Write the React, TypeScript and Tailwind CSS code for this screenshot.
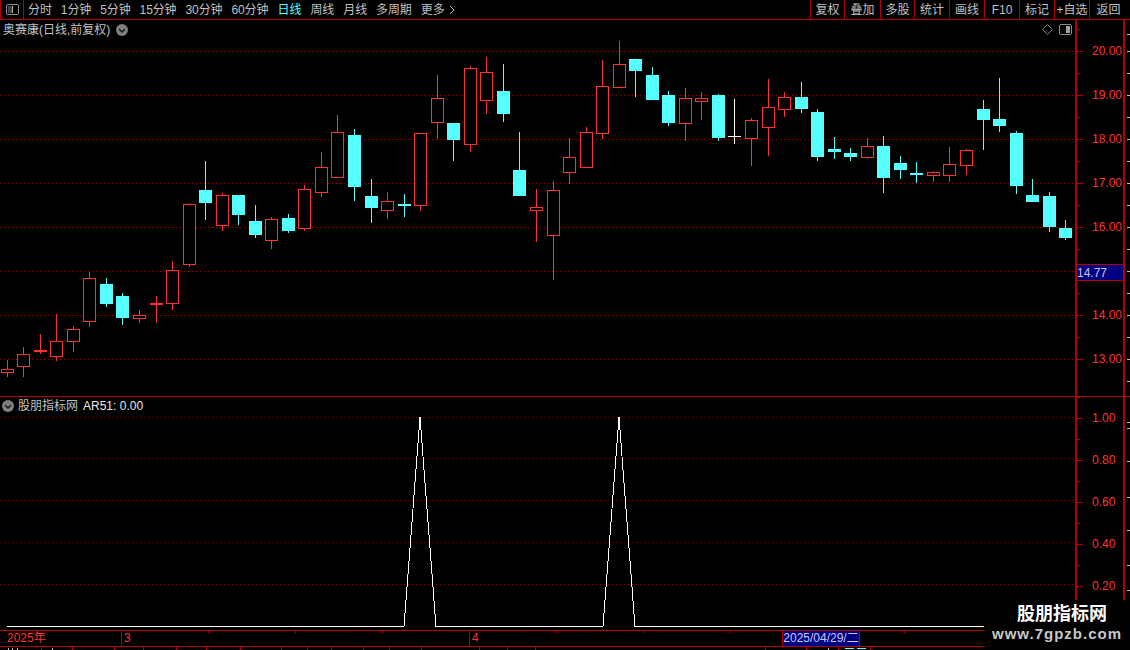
const RED_LINE = 'bg-[#b40000]';

// [type, high, bodyTop, bodyBottom, low] in page pixels
const candles: [string, number, number, number, number][] = [
  ['r', 360, 369, 372, 377], ['r', 347, 354, 366, 377], ['f', 334, 350, 352, 354], ['r', 314, 341, 356, 361],
  ['r', 326, 329, 341, 352], ['r', 272, 278, 321, 327], ['c', 278, 284, 304, 307], ['c', 293, 296, 318, 325],
  ['r', 310, 315, 318, 323], ['f', 296, 303, 305, 323], ['r', 261, 270, 303, 310], ['r', 204, 204, 264, 267],
  ['c', 161, 190, 203, 220], ['r', 193, 195, 225, 231], ['c', 195, 195, 215, 225], ['c', 205, 221, 235, 238],
  ['r', 217, 219, 240, 249], ['c', 214, 218, 231, 233], ['r', 185, 189, 228, 231], ['r', 152, 167, 192, 197],
  ['r', 115, 132, 177, 178], ['c', 129, 135, 187, 201], ['c', 179, 196, 208, 223], ['r', 192, 201, 210, 219],
  ['c', 194, 204, 206, 217], ['r', 133, 133, 205, 211], ['r', 75, 98, 122, 139], ['c', 123, 123, 140, 161],
  ['r', 66, 68, 144, 152], ['r', 57, 72, 100, 114], ['c', 64, 91, 114, 122], ['c', 132, 170, 196, 196],
  ['r', 189, 207, 210, 242], ['r', 181, 190, 235, 280], ['r', 138, 157, 172, 184], ['r', 127, 132, 167, 168],
  ['r', 60, 86, 133, 139], ['r', 41, 64, 87, 88], ['c', 59, 59, 71, 97], ['c', 67, 75, 100, 100],
  ['c', 91, 95, 123, 126], ['r', 88, 98, 123, 141], ['r', 92, 98, 101, 120], ['c', 94, 95, 138, 141],
  ['w', 99, 136, 137, 144], ['r', 118, 120, 138, 166], ['r', 79, 107, 127, 156], ['r', 92, 97, 109, 117],
  ['c', 82, 97, 109, 113], ['c', 109, 112, 157, 161], ['c', 137, 149, 152, 159], ['c', 148, 153, 157, 161],
  ['r', 138, 146, 157, 159], ['c', 136, 146, 178, 193], ['c', 156, 163, 170, 179], ['c', 162, 173, 175, 183],
  ['r', 171, 172, 175, 182], ['r', 147, 164, 175, 182], ['r', 149, 150, 165, 175], ['c', 100, 109, 120, 150],
  ['c', 78, 119, 126, 132], ['c', 131, 133, 186, 194], ['c', 179, 195, 202, 202], ['c', 192, 196, 227, 232],
  ['c', 220, 228, 238, 240],
];

function Candle({ i, d }: { i: number; d: [string, number, number, number, number] }) {
  const [type, high, top, bottom, low] = d;
  const x = Math.floor(7.2 + 16.54 * i);
  const color = type === 'c' ? '#55ffff' : type === 'w' ? '#ffffff' : '#ff3232';
  if (type === 'r') {
    return (
      <g>
        <rect x={x} y={high} width={1} height={top - high} fill={color} />
        <rect x={x} y={bottom} width={1} height={low - bottom} fill={color} />
        <rect x={x - 5.5} y={top + 0.5} width={12} height={bottom - top} fill="#000" stroke={color} />
      </g>
    );
  }
  return (
    <g>
      <rect x={x} y={high} width={1} height={low - high} fill={color} />
      <rect x={x - 6} y={top} width={13} height={bottom - top} fill={color} />
    </g>
  );
}

function DownBadge() {
  return (
    <svg width="12" height="12" viewBox="0 0 12 12">
      <circle cx="6" cy="6" r="6" fill="#808080" />
      <path d="M3 5l3 3 3-3" fill="none" stroke="#1a1a1a" strokeWidth="1.5" />
    </svg>
  );
}

function PanelIcon({ side }: { side: 'left' | 'right' }) {
  return (
    <svg width="13" height="11" viewBox="0 0 13 11" shapeRendering="crispEdges">
      <rect x="0.5" y="0.5" width="12" height="10" rx="2" fill="none" stroke="#8c8c8c" />
      {side === 'left' ? (
        <>
          <rect x="2" y="2" width="4" height="7" fill="#404040" />
          <rect x="6" y="2" width="1" height="7" fill="#b0b0b0" />
        </>
      ) : (
        <rect x="7" y="2" width="4" height="7" fill="#a0a0a0" />
      )}
    </svg>
  );
}

function AxisRow({ label, height, tickColor }: { label?: string; height: number; tickColor: string }) {
  return (
    <div className="relative flex items-center" style={{ height }}>
      <div className={`absolute left-0 top-0 h-px w-[3px] ${tickColor}`} />
      <div className={`h-px w-[6px] ${tickColor}`} />
      <span className="ml-[9px] text-[12px] leading-none text-[#ff3232]">{label}</span>
    </div>
  );
}

const navItems = ['分时', '1分钟', '5分钟', '15分钟', '30分钟', '60分钟', '日线', '周线', '月线', '多周期'];
const toolItems: [string, string][] = [
  ['复权', 'w-[34px]'], ['叠加', 'w-[36px]'], ['多股', 'w-[34px]'], ['统计', 'w-[35px]'], ['画线', 'w-[35px]'],
  ['F10', 'w-[35px]'], ['标记', 'w-[35px]'], ['+自选', 'w-[35px]'], ['返回', 'w-[38px]'],
];
const priceLabels = ['20.00', '19.00', '18.00', '17.00', '16.00', '', '14.00', '13.00'];
const subLabels = ['1.00', '0.80', '0.60', '0.40', '0.20'];
const stripTicks = [34, 51, 73, 95, 117, 139, 161, 183, 205, 227, 249, 271, 293, 315, 337, 359, 381, 422, 428, 461, 497, 530, 565, 590];

export default function App() {
  return (
    <div className="relative flex h-[650px] w-[1130px] flex-col overflow-hidden bg-black font-['Liberation_Sans','Noto_Sans_CJK_SC',sans-serif] text-[#c0c0c0]">
      {/* top toolbar */}
      <header className="flex h-[20px] shrink-0 border-b border-[#b40000] text-[12px] leading-[20px]">
        <div className="flex w-[24px] items-center justify-center border-x border-[#b40000]">
          <PanelIcon side="left" />
        </div>
        <nav className="ml-[4px] flex flex-1 gap-[9px] whitespace-nowrap">
          {navItems.map((n) => (
            <span key={n} className={n === '日线' ? 'text-[#55ffff]' : 'tracking-[-0.1px]'}>
              {n}
            </span>
          ))}
          <span className="flex items-center gap-[4px]">
            更多
            <svg width="6" height="10" viewBox="0 0 6 10">
              <path d="M1 1l4 4-4 4" fill="none" stroke="#c0c0c0" />
            </svg>
          </span>
        </nav>
        <div className="flex">
          {toolItems.map(([t, w]) => (
            <span key={t} className={`${w} border-l border-[#b40000] text-center whitespace-nowrap`}>
              {t}
            </span>
          ))}
          <span className="w-[3px]" />
        </div>
      </header>

      {/* price pane */}
      <section className="flex h-[377px] shrink-0 border-b border-[#b40000]">
        <div className="relative w-[1075px] shrink-0">
          <svg width="1075" height="376" viewBox="0 20 1075 376" shapeRendering="crispEdges" className="block">
            {[51, 95, 139, 183, 227, 271, 315, 359].map((y) => (
              <line key={y} x1="0" x2="1075" y1={y + 0.5} y2={y + 0.5} stroke="#a00000" strokeDasharray="1 3" />
            ))}
            {candles.map((d, i) => (
              <Candle key={i} i={i} d={d} />
            ))}
          </svg>
          <div className="absolute left-[3px] top-[1px] flex h-[18px] items-center gap-[6px] text-[12px] whitespace-nowrap">
            <span>奥赛康(日线,前复权)</span>
            <DownBadge />
          </div>
          <div className="absolute right-[3px] top-[4px] flex items-center gap-[6px]">
            <svg width="11" height="11" viewBox="0 0 11 11">
              <path d="M5.5 0.5l5 5-5 5-5-5z" fill="none" stroke="#808080" />
            </svg>
            <PanelIcon side="right" />
          </div>
        </div>
        <div className="relative w-[50px] shrink-0 border-x-2 border-[#b40000] pt-[9px]">
          {priceLabels.map((p) => (
            <AxisRow key={p || 'blank'} label={p} height={44} tickColor={RED_LINE} />
          ))}
          <div className="absolute left-0 right-0 top-[244px] flex h-[17px] items-center border-y border-[#b40000] bg-[#000080] text-[12px] text-[#c8c8ff]">
            14.77
          </div>
        </div>
        <div className="flex-1" />
      </section>

      {/* indicator pane */}
      <section className="flex h-[233px] shrink-0">
        <div className="relative w-[1075px] shrink-0">
          <svg width="1075" height="233" viewBox="0 397 1075 233" className="block">
            {[417, 458, 500, 542, 584].map((y) => (
              <line key={y} x1="0" x2="1075" y1={y + 0.5} y2={y + 0.5} stroke="#8c0000" strokeDasharray="1 3" shapeRendering="crispEdges" />
            ))}
            <polyline
              points="7,626.5 404,626.5 420,417 436,626.5 603,626.5 619,417 635,626.5 1000,626.5"
              fill="none"
              stroke="#ffffff"
              strokeWidth="1"
              shapeRendering="crispEdges"
            />
          </svg>
          <div className="absolute left-[2px] top-[2px] flex h-[14px] items-center gap-[4px] text-[12px] whitespace-nowrap">
            <DownBadge />
            <span>股朋指标网</span>
            <span className="ml-[1px] text-[#e8e8e8]">AR51: 0.00</span>
          </div>
        </div>
        <div className="w-[50px] shrink-0 border-x-2 border-[#b40000]">
          {subLabels.map((p) => (
            <AxisRow key={p} label={p} height={42} tickColor={RED_LINE} />
          ))}
        </div>
        <div className="flex-1" />
      </section>

      {/* time axis */}
      <section className="relative flex h-[17px] shrink-0 border-y border-[#b40000] text-[12px] leading-[15px] text-[#ff3232]">
        <div className="w-[121px] pl-[7px]">2025年</div>
        <div className="w-[348px] border-l border-[#b40000] pl-[2px]">3</div>
        <div className="flex-1 border-l border-[#b40000] pl-[2px]">4</div>
        <svg width="1130" height="2" className="absolute left-0 top-0" shapeRendering="crispEdges">
          {[208, 295, 382, 556, 643, 730, 817, 904].map((x) => (
            <rect key={x} x={x} y="0" width="1" height="2" fill="#b40000" />
          ))}
        </svg>
        <div className="absolute left-[782px] top-0 h-[15px] w-[78px] border-x border-[#b40000] bg-[#000080] text-center text-[#c8c8ff] whitespace-nowrap">
          2025/04/29/二
        </div>
      </section>

      {/* status bar, cut off by the window edge */}
      <footer className="relative flex flex-1">
        {[42, 31, 42, 29, 33, 30, 34, 41, 26, 24, 32, 26, 32, 58, 28, 28, 230, 41, 32, 32].map((w, i) => (
          <div key={i} className="h-full border-r border-[#b40000]" style={{ width: w }} />
        ))}
        <svg width="900" height="3" className="absolute left-0 top-0" shapeRendering="crispEdges">
          <rect x="8" y="1" width="1" height="2" fill="#c0c0c0" />
          <rect x="12" y="1" width="1" height="2" fill="#c0c0c0" />
          <rect x="17" y="1" width="1" height="2" fill="#c0c0c0" />
          <rect x="52" y="1" width="1" height="2" fill="#c0c0c0" />
          <rect x="828" y="1" width="1" height="2" fill="#c0c0c0" />
          <rect x="845" y="1" width="9" height="1" fill="#55ffff" />
          <rect x="857" y="1" width="9" height="1" fill="#55ffff" />
        </svg>
      </footer>

      {/* right edge scale marks */}
      <svg width="4" height="580" className="absolute right-0 top-[20px]" shapeRendering="crispEdges">
        {stripTicks.map((y) => (
          <rect key={y} x="1" y={y - 20} width="3" height="1" fill="#c0c0c0" />
        ))}
      </svg>

      {/* watermark */}
      <div className="absolute bottom-0 right-0 flex h-[50px] w-[146px] flex-col items-center bg-black pt-[4px]">
        <span className="ml-[10px] text-[18px] leading-[20px] font-bold text-white">股朋指标网</span>
        <span className="text-[15px] leading-[20px] font-bold tracking-[1px] text-[#c8c8c8]">www.7gpzb.com</span>
      </div>
    </div>
  );
}
